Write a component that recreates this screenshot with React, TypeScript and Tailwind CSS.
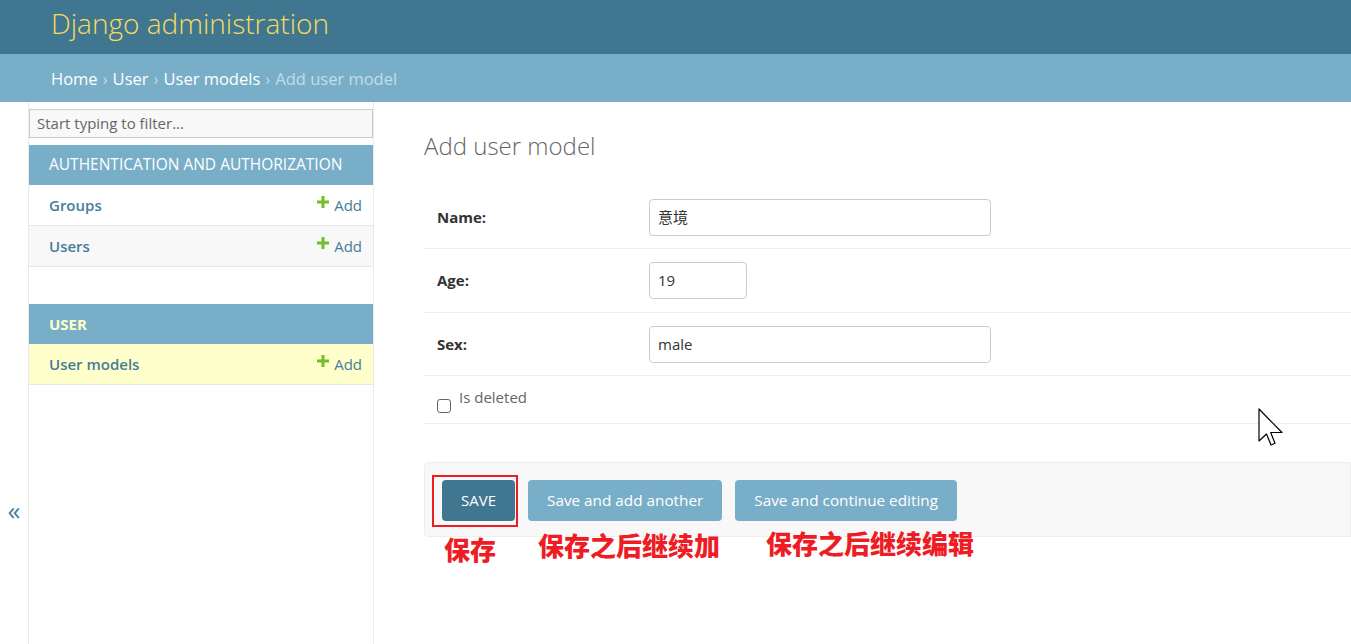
import React from "react";

const FONT = { fontFamily: '"Open Sans", "Noto Sans CJK SC", sans-serif' };

function AddLink() {
  return (
    <span className="flex items-center gap-[5px] text-[15px] text-[#447e9b]">
      <svg width="12" height="12" viewBox="0 0 12 12" className="-mt-[6px]">
        <path d="M4.5 0h3v4.5H12v3H7.5V12h-3V7.5H0v-3h4.5z" fill="#70bf2b" />
      </svg>
      Add
    </span>
  );
}

function NavRow({ label, bg }: { label: string; bg: string }) {
  return (
    <div className={`flex items-center justify-between h-[41px] pl-[20px] pr-[11px] border-b border-[#e8e8e8] ${bg}`}>
      <span className="text-[15px] font-semibold text-[#447e9b]">{label}</span>
      <AddLink />
    </div>
  );
}

function FormRow({ label, value, width, h }: { label: string; value: string; width: string; h: string }) {
  return (
    <div className={`flex items-center ${h} pl-[13px] border-b border-[#eeeeee]`}>
      <label className="w-[212px] text-[15px] font-bold text-[#333]">{label}</label>
      <div className={`h-[37px] ${width} border border-[#cccccc] rounded-[4px] flex items-center pl-[8px] text-[15px] text-[#333]`}>
        <span>{value}</span>
      </div>
    </div>
  );
}

export default function App() {
  return (
    <div className="h-[644px] w-[1351px] overflow-hidden bg-white text-[#333]" style={FONT}>
      <div className="h-[54px] bg-[#417690] flex items-start pt-[4px] pl-[51px]">
        <span className="text-[28px] leading-[38px] font-light text-[#f5dd5d]">Django administration</span>
      </div>
      <div className="h-[48px] bg-[#79aec8] flex items-center pl-[51px] text-[16.5px] text-white pt-[2px]">
        <span>Home</span>
        <span className="mx-[5px] text-[#c4dce8]">›</span>
        <span>User</span>
        <span className="mx-[5px] text-[#c4dce8]">›</span>
        <span>User models</span>
        <span className="mx-[5px] text-[#c4dce8]">›</span>
        <span className="text-[#c4dce8]">Add user model</span>
      </div>
      <div className="flex h-[542px]">
        <div className="w-[29px] border-r border-[#eaeaea] flex justify-center pt-[395px]">
          <span className="text-[26px] leading-none text-[#447e9b]">«</span>
        </div>
        <div className="w-[345px] shrink-0 border-r border-[#eaeaea] pt-[7px]">
          <div className="h-[29px] border border-[#cccccc] bg-[#f8f8f8] flex items-center pl-[7px] text-[15px] text-[#666]">
            Start typing to filter...
          </div>
          <div className="mt-[7px]">
            <div className="h-[40px] bg-[#79aec8] flex items-center pl-[20px] text-[15.5px] text-white">
              AUTHENTICATION AND AUTHORIZATION
            </div>
            <NavRow label="Groups" bg="bg-white" />
            <NavRow label="Users" bg="bg-[#f8f8f8]" />
          </div>
          <div className="mt-[37px]">
            <div className="h-[40px] bg-[#79aec8] flex items-center pl-[20px] text-[15px] font-bold text-[#ffffcc]">
              USER
            </div>
            <NavRow label="User models" bg="bg-[#ffffcc]" />
          </div>
        </div>
        <div className="flex-1 pl-[50px] relative">
          <h1 className="h-[84px] pt-[26px] text-[24px] font-light text-[#666]">Add user model</h1>
          <FormRow label="Name:" value="意境" width="w-[342px]" h="h-[63px]" />
          <FormRow label="Age:" value="19" width="w-[98px]" h="h-[64px]" />
          <FormRow label="Sex:" value="male" width="w-[342px]" h="h-[63px]" />
          <div className="flex items-center h-[48px] pl-[13px] border-b border-[#eeeeee]">
            <span className="w-[14px] h-[14px] border border-[#666] rounded-[3px] mt-[12px]" />
            <span className="ml-[8px] text-[15px] text-[#666] mb-[4px]">Is deleted</span>
          </div>
          <div className="relative mt-[38px] h-[75px] bg-[#f8f8f8] border border-[#eeeeee] rounded-l-[4px] flex items-center pl-[17px] gap-[13px] pt-[2px]">
            <div className="relative">
              <div className="h-[41px] px-[19px] rounded-[4px] bg-[#417690] flex items-center text-[15px] text-white">SAVE</div>
              <div className="absolute -left-[10px] -top-[5px] w-[86px] h-[52px] border-[2px] border-[#ee1c24]" />
            </div>
            <div className="h-[41px] px-[19px] rounded-[4px] bg-[#79aec8] flex items-center text-[15.3px] text-white">Save and add another</div>
            <div className="h-[41px] px-[19px] rounded-[4px] bg-[#79aec8] flex items-center text-[15.3px] text-white">Save and continue editing</div>
            <span className="absolute left-[19px] top-[74px] text-[26px] font-black text-[#ee1c24] leading-none">保存</span>
            <span className="absolute left-[113px] top-[70px] text-[26px] font-black text-[#ee1c24] leading-none">保存之后继续加</span>
            <span className="absolute left-[341px] top-[68px] text-[26px] font-black text-[#ee1c24] leading-none">保存之后继续编辑</span>
          </div>
          <svg className="absolute left-[884px] top-[306px]" width="26" height="40" viewBox="0 0 26 40">
            <path d="M1 1 L1 33 L8.5 26 L13 37 L17 35.3 L12.7 24.5 L24 24.5 Z" fill="white" stroke="black" strokeWidth="1.2" strokeLinejoin="round" />
          </svg>
        </div>
      </div>
    </div>
  );
}
